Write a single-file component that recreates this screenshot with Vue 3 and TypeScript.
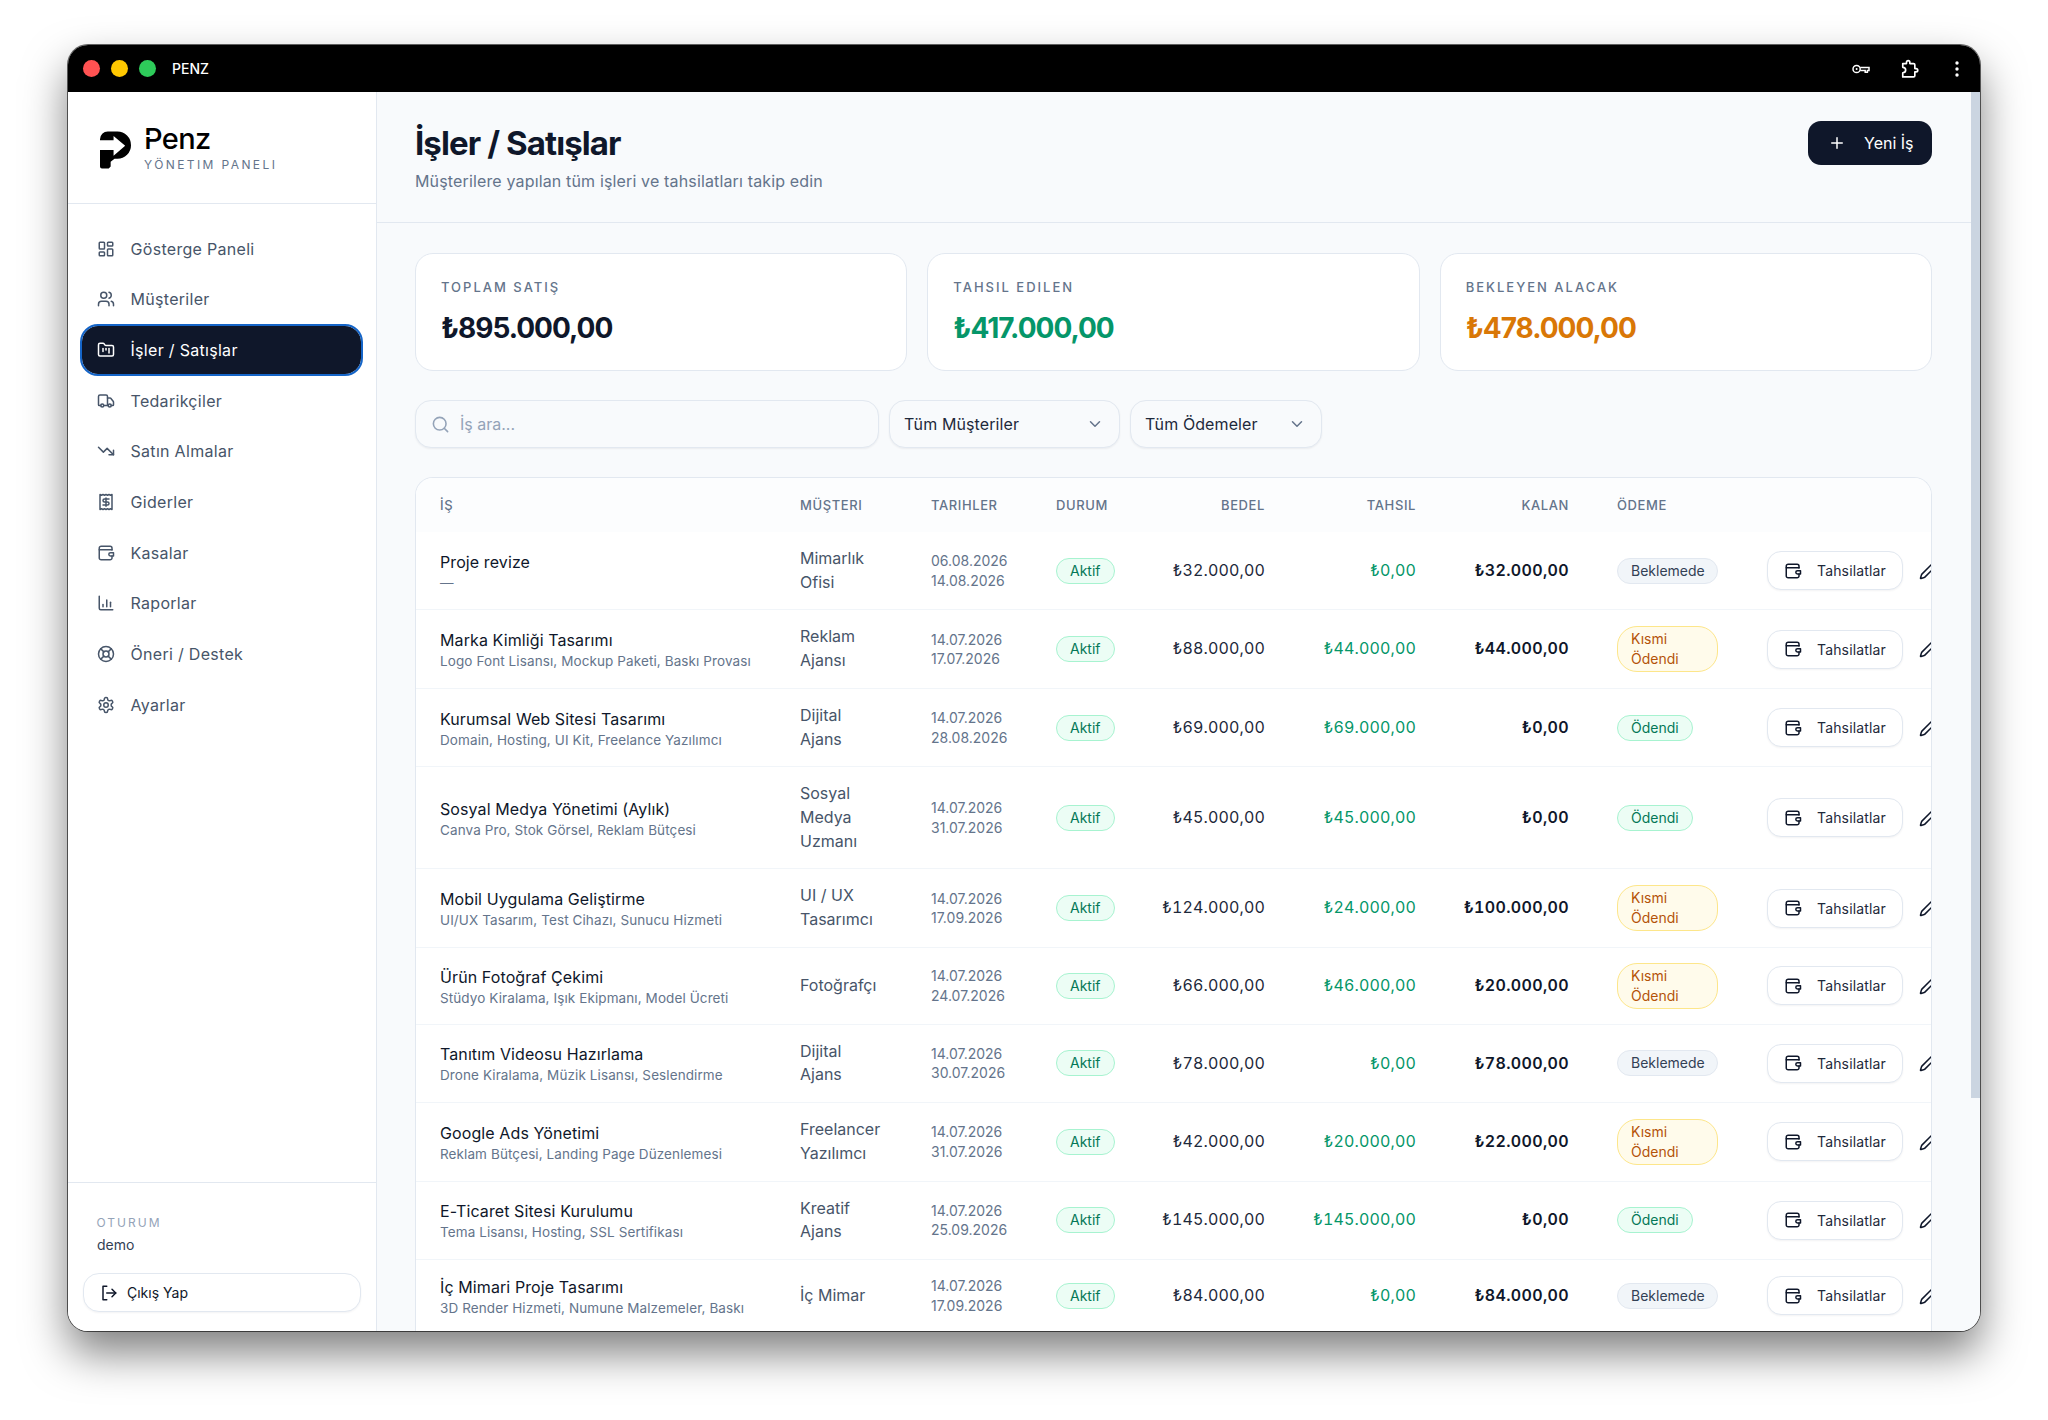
<template>
  <div class="page">
    <div class="window">
      <div class="titlebar">
        <span class="dot dot-red"></span>
        <span class="dot dot-yellow"></span>
        <span class="dot dot-green"></span>
        <span class="app-name">PENZ</span>
        <div class="title-actions">
          <svg class="key-icon" viewBox="0 0 18 10" fill="none" stroke="currentColor" stroke-width="1.5">
            <circle cx="4.6" cy="5" r="3.6" />
            <circle cx="4.6" cy="5" r="1" fill="currentColor" stroke="none" />
            <path d="M8.2 3.4h8.8v3.2h-1.6v1.6h-2.2V6.6H8.2" />
          </svg>
          <svg class="puzzle-icon" viewBox="0 0 24 24" fill="none" stroke="currentColor" stroke-width="2" stroke-linejoin="round">
            <path d="M20.5 11.5H19V7a1.5 1.5 0 0 0-1.500-1.500h-4.500V4a2 2 0 0 0-4 0v1.500H4.500V10c2.500 0 3.500 1.500 3.500 3.300S7 16.500 4.500 16.500V21.500H17.500A1.500 1.500 0 0 0 19 20v-4.500h1.500a2 2 0 0 0 0-4z" />
          </svg>
          <svg class="kebab-icon" viewBox="0 0 4 16" fill="currentColor">
            <circle cx="2" cy="2" r="1.700" />
            <circle cx="2" cy="8" r="1.700" />
            <circle cx="2" cy="14" r="1.700" />
          </svg>
        </div>
      </div>

      <div class="body">
        <aside class="sidebar">
          <div class="brand">
            <svg class="brand-mark" viewBox="0 0 32 38">
              <path d="M0 8a8 8 0 0 1 8-8h10a14 14 0 0 1 0 28h-3l-4 3v5l-2 2H2a2 2 0 0 1-2-2z" fill="#000" />
              <path d="M0 9h14V4.500L26 14.500 14 25v-6H0z" fill="#fff" />
            </svg>
            <div>
              <div class="brand-name">Penz</div>
              <div class="brand-sub">YÖNETIM PANELI</div>
            </div>
          </div>

          <nav class="nav">
            <a v-for="item in navItems" :key="item.label" class="nav-item" :class="{ active: item.label === activeNav }">
              <svg class="nav-icon" viewBox="0 0 24 24" v-html="icons[item.icon]" />
              <span>{{ item.label }}</span>
            </a>
          </nav>

          <div class="session">
            <div class="session-label">OTURUM</div>
            <div class="session-user">demo</div>
            <button type="button" class="logout">
              <svg class="logout-icon" viewBox="0 0 24 24" v-html="icons.logout" />
              Çıkış Yap
            </button>
          </div>
        </aside>

        <main class="main">
          <div class="content">
            <header class="page-head">
              <div>
                <h1>İşler / Satışlar</h1>
                <p>Müşterilere yapılan tüm işleri ve tahsilatları takip edin</p>
              </div>
              <button type="button" class="new-btn">
                <svg class="plus-icon" viewBox="0 0 24 24" v-html="icons.plus" />
                Yeni İş
              </button>
            </header>

            <section class="cards">
              <div v-for="card in cards" :key="card.label" class="card">
                <div class="card-label">{{ card.label }}</div>
                <div class="card-value" :class="card.tone">{{ card.value }}</div>
              </div>
            </section>

            <section class="filters">
              <div class="search">
                <svg class="search-icon" viewBox="0 0 24 24" v-html="icons.search" />
                <span>İş ara...</span>
              </div>
              <div class="select customer">
                <span>Tüm Müşteriler</span>
                <svg class="chevron" viewBox="0 0 24 24" v-html="icons.chevron" />
              </div>
              <div class="select payment">
                <span>Tüm Ödemeler</span>
                <svg class="chevron" viewBox="0 0 24 24" v-html="icons.chevron" />
              </div>
            </section>

            <section class="table-card">
              <table>
                <colgroup>
                  <col style="width: 366px" />
                  <col style="width: 131px" />
                  <col style="width: 125px" />
                  <col style="width: 95px" />
                  <col style="width: 150px" />
                  <col style="width: 151px" />
                  <col style="width: 153px" />
                  <col style="width: 162px" />
                  <col style="width: 230px" />
                </colgroup>
                <thead>
                  <tr>
                    <th class="first">İŞ</th>
                    <th>MÜŞTERI</th>
                    <th>TARIHLER</th>
                    <th>DURUM</th>
                    <th class="num">BEDEL</th>
                    <th class="num">TAHSIL</th>
                    <th class="num">KALAN</th>
                    <th class="pay-col">ÖDEME</th>
                    <th></th>
                  </tr>
                </thead>
                <tbody>
                  <tr v-for="row in rows" :key="row.name">
                    <td class="first">
                      <div class="job-name">{{ row.name }}</div>
                      <div class="job-sub">{{ row.sub }}</div>
                    </td>
                    <td class="client">{{ row.client }}</td>
                    <td class="dates">{{ row.start }}<br />{{ row.end }}</td>
                    <td><span class="pill ok">Aktif</span></td>
                    <td class="num amount">₺{{ row.price }}</td>
                    <td class="num collected">₺{{ row.paid }}</td>
                    <td class="num remaining">₺{{ row.left }}</td>
                    <td class="pay-col"><span class="pill" :class="toneOf(row.status)">{{ row.status }}</span></td>
                    <td>
                      <div class="row-actions">
                        <button type="button" class="collect-btn">
                          <svg class="wallet-icon" viewBox="0 0 24 24" v-html="icons.wallet" />
                          Tahsilatlar
                        </button>
                        <svg class="pencil-icon" viewBox="0 0 24 24" v-html="icons.pencil" />
                      </div>
                    </td>
                  </tr>
                </tbody>
              </table>
            </section>
          </div>
          <div class="scrollbar"><div class="scroll-thumb"></div></div>
        </main>
      </div>
    </div>
  </div>
</template>

<script setup lang="ts">
type Status = 'Beklemede' | 'Kısmi Ödendi' | 'Ödendi'

interface JobRow {
  name: string
  sub: string
  client: string
  start: string
  end: string
  price: string
  paid: string
  left: string
  status: Status
}

const activeNav = 'İşler / Satışlar'

const icons: Record<string, string> = {
  dashboard: '<rect x="3" y="3" width="7" height="9" rx="1"/><rect x="14" y="3" width="7" height="5" rx="1"/><rect x="14" y="12" width="7" height="9" rx="1"/><rect x="3" y="16" width="7" height="5" rx="1"/>',
  users: '<path d="M16 21v-2a4 4 0 0 0-4-4H6a4 4 0 0 0-4 4v2"/><circle cx="9" cy="7" r="4"/><path d="M22 21v-2a4 4 0 0 0-3-3.870"/><path d="M16 3.130a4 4 0 0 1 0 7.750"/>',
  folder: '<path d="M4 20h16a2 2 0 0 0 2-2V8a2 2 0 0 0-2-2h-7.930a2 2 0 0 1-1.660-.9l-.82-1.200A2 2 0 0 0 7.930 3H4a2 2 0 0 0-2 2v13c0 1.100.9 2 2 2Z"/><path d="M8 10v4"/><path d="M12 10v2"/><path d="M16 10v6"/>',
  truck: '<path d="M14 18V6a2 2 0 0 0-2-2H4a2 2 0 0 0-2 2v11a1 1 0 0 0 1 1h2"/><path d="M15 18H9"/><path d="M19 18h2a1 1 0 0 0 1-1v-3.650a1 1 0 0 0-.22-.624l-3.480-4.350A1 1 0 0 0 17.520 8H14"/><circle cx="17" cy="18" r="2"/><circle cx="7" cy="18" r="2"/>',
  trend: '<polyline points="22 17 13.500 8.500 8.500 13.500 2 7"/><polyline points="16 17 22 17 22 11"/>',
  receipt: '<path d="M4 2v20l2-1 2 1 2-1 2 1 2-1 2 1 2-1 2 1V2l-2 1-2-1-2 1-2-1-2 1-2-1-2 1Z"/><path d="M16 8h-6a2 2 0 1 0 0 4h4a2 2 0 1 1 0 4H8"/><path d="M12 17.500v-11"/>',
  wallet: '<path d="M20 8V5.500A2.500 2.500 0 0 0 17.500 3h-12A2.500 2.500 0 0 0 3 5.500v13A2.500 2.500 0 0 0 5.500 21h12a2.500 2.500 0 0 0 2.500-2.500V16"/><path d="M3 7.500h17"/><path d="M22 11.500h-4a2.250 2.250 0 0 0 0 4.500h4z"/>',
  chart: '<path d="M3 3v16a2 2 0 0 0 2 2h16"/><path d="M8 17v-3"/><path d="M13 17V8"/><path d="M18 17v-6"/>',
  buoy: '<circle cx="12" cy="12" r="10"/><circle cx="12" cy="12" r="4"/><path d="m4.930 4.930 4.240 4.240"/><path d="m14.830 9.170 4.240-4.240"/><path d="m14.830 14.830 4.240 4.240"/><path d="m9.170 14.830-4.240 4.240"/>',
  settings: '<path d="M12.220 2h-.44a2 2 0 0 0-2 2v.18a2 2 0 0 1-1 1.730l-.43.25a2 2 0 0 1-2 0l-.15-.08a2 2 0 0 0-2.730.73l-.22.38a2 2 0 0 0 .73 2.730l.15.1a2 2 0 0 1 1 1.720v.51a2 2 0 0 1-1 1.740l-.15.09a2 2 0 0 0-.73 2.730l.22.38a2 2 0 0 0 2.730.73l.15-.08a2 2 0 0 1 2 0l.43.25a2 2 0 0 1 1 1.730V20a2 2 0 0 0 2 2h.44a2 2 0 0 0 2-2v-.18a2 2 0 0 1 1-1.730l.43-.25a2 2 0 0 1 2 0l.15.08a2 2 0 0 0 2.730-.73l.22-.39a2 2 0 0 0-.73-2.730l-.15-.08a2 2 0 0 1-1-1.740v-.5a2 2 0 0 1 1-1.740l.15-.09a2 2 0 0 0 .73-2.730l-.22-.38a2 2 0 0 0-2.730-.73l-.15.08a2 2 0 0 1-2 0l-.43-.25a2 2 0 0 1-1-1.730V4a2 2 0 0 0-2-2z"/><circle cx="12" cy="12" r="3"/>',
  logout: '<path d="M9 3H4v18h5"/><path d="m16 17 5-5-5-5"/><path d="M21 12H9"/>',
  plus: '<path d="M5 12h14"/><path d="M12 5v14"/>',
  search: '<circle cx="11" cy="11" r="8"/><path d="m21 21-4.300-4.300"/>',
  chevron: '<path d="m6 9 6 6 6-6"/>',
  pencil: '<path d="M21.174 6.812a1 1 0 0 0-3.986-3.987L3.842 16.174a2 2 0 0 0-.5.83l-1.321 4.352a.5.5 0 0 0 .623.622l4.353-1.320a2 2 0 0 0 .83-.497z"/>'
}

const navItems = [
  { label: 'Gösterge Paneli', icon: 'dashboard' },
  { label: 'Müşteriler', icon: 'users' },
  { label: 'İşler / Satışlar', icon: 'folder' },
  { label: 'Tedarikçiler', icon: 'truck' },
  { label: 'Satın Almalar', icon: 'trend' },
  { label: 'Giderler', icon: 'receipt' },
  { label: 'Kasalar', icon: 'wallet' },
  { label: 'Raporlar', icon: 'chart' },
  { label: 'Öneri / Destek', icon: 'buoy' },
  { label: 'Ayarlar', icon: 'settings' }
]

const cards = [
  { label: 'TOPLAM SATIŞ', value: '₺895.000,00', tone: 'ink' },
  { label: 'TAHSIL EDILEN', value: '₺417.000,00', tone: 'green' },
  { label: 'BEKLEYEN ALACAK', value: '₺478.000,00', tone: 'orange' }
]

const rows: JobRow[] = [
  { name: 'Proje revize', sub: '—', client: 'Mimarlık Ofisi', start: '06.08.2026', end: '14.08.2026', price: '32.000,00', paid: '0,00', left: '32.000,00', status: 'Beklemede' },
  { name: 'Marka Kimliği Tasarımı', sub: 'Logo Font Lisansı, Mockup Paketi, Baskı Provası', client: 'Reklam Ajansı', start: '14.07.2026', end: '17.07.2026', price: '88.000,00', paid: '44.000,00', left: '44.000,00', status: 'Kısmi Ödendi' },
  { name: 'Kurumsal Web Sitesi Tasarımı', sub: 'Domain, Hosting, UI Kit, Freelance Yazılımcı', client: 'Dijital Ajans', start: '14.07.2026', end: '28.08.2026', price: '69.000,00', paid: '69.000,00', left: '0,00', status: 'Ödendi' },
  { name: 'Sosyal Medya Yönetimi (Aylık)', sub: 'Canva Pro, Stok Görsel, Reklam Bütçesi', client: 'Sosyal Medya Uzmanı', start: '14.07.2026', end: '31.07.2026', price: '45.000,00', paid: '45.000,00', left: '0,00', status: 'Ödendi' },
  { name: 'Mobil Uygulama Geliştirme', sub: 'UI/UX Tasarım, Test Cihazı, Sunucu Hizmeti', client: 'UI / UX Tasarımcı', start: '14.07.2026', end: '17.09.2026', price: '124.000,00', paid: '24.000,00', left: '100.000,00', status: 'Kısmi Ödendi' },
  { name: 'Ürün Fotoğraf Çekimi', sub: 'Stüdyo Kiralama, Işık Ekipmanı, Model Ücreti', client: 'Fotoğrafçı', start: '14.07.2026', end: '24.07.2026', price: '66.000,00', paid: '46.000,00', left: '20.000,00', status: 'Kısmi Ödendi' },
  { name: 'Tanıtım Videosu Hazırlama', sub: 'Drone Kiralama, Müzik Lisansı, Seslendirme', client: 'Dijital Ajans', start: '14.07.2026', end: '30.07.2026', price: '78.000,00', paid: '0,00', left: '78.000,00', status: 'Beklemede' },
  { name: 'Google Ads Yönetimi', sub: 'Reklam Bütçesi, Landing Page Düzenlemesi', client: 'Freelancer Yazılımcı', start: '14.07.2026', end: '31.07.2026', price: '42.000,00', paid: '20.000,00', left: '22.000,00', status: 'Kısmi Ödendi' },
  { name: 'E-Ticaret Sitesi Kurulumu', sub: 'Tema Lisansı, Hosting, SSL Sertifikası', client: 'Kreatif Ajans', start: '14.07.2026', end: '25.09.2026', price: '145.000,00', paid: '145.000,00', left: '0,00', status: 'Ödendi' },
  { name: 'İç Mimari Proje Tasarımı', sub: '3D Render Hizmeti, Numune Malzemeler, Baskı', client: 'İç Mimar', start: '14.07.2026', end: '17.09.2026', price: '84.000,00', paid: '0,00', left: '84.000,00', status: 'Beklemede' }
]

const toneOf = (status: Status) => {
  if (status === 'Ödendi') return 'ok'
  if (status === 'Kısmi Ödendi') return 'warn'
  return 'muted'
}
</script>

<style>
html,
body {
  margin: 0;
  background: #fff;
}
</style>

<style scoped>
* {
  box-sizing: border-box;
}

.page {
  width: 2048px;
  height: 1420px;
  padding: 45px 68px 89px;
  overflow: hidden;
  font-family: Inter, "Noto Sans", sans-serif;
  color: #0f172a;
}

.window {
  display: flex;
  flex-direction: column;
  height: 100%;
  border-radius: 20px;
  overflow: hidden;
  background: #fff;
  box-shadow: 0 0 0 1px rgba(0, 0, 0, 0.6), 0 22px 44px rgba(0, 0, 0, 0.5);
}

.titlebar {
  flex: none;
  display: flex;
  align-items: center;
  height: 47px;
  padding: 0 21px 0 15px;
  background: #000;
  color: #fff;
}

.dot {
  width: 17px;
  height: 17px;
  margin-right: 11px;
  border-radius: 50%;
}

.dot-red { background: #ff5252; }
.dot-yellow { background: #ffc800; }
.dot-green { background: #2ecb5a; }

.app-name {
  margin-left: 5px;
  font-size: 14px;
  font-weight: 500;
}

.title-actions {
  display: flex;
  align-items: center;
  margin-left: auto;
}

.key-icon {
  width: 18px;
  height: 10px;
  margin-right: 29px;
}

.puzzle-icon {
  width: 20px;
  height: 20px;
  margin-right: 36px;
}

.kebab-icon {
  width: 4px;
  height: 16px;
}

.body {
  flex: 1;
  display: flex;
  min-height: 0;
}

/* sidebar */
.sidebar {
  flex: none;
  display: flex;
  flex-direction: column;
  width: 309px;
  border-right: 1px solid #e2e8f0;
  background: #fff;
}

.brand {
  display: flex;
  align-items: center;
  gap: 13px;
  height: 112px;
  padding: 0 32px;
  border-bottom: 1px solid #e2e8f0;
}

.brand-mark {
  width: 31px;
  height: 38px;
  margin-top: 4px;
}

.brand-name {
  position: relative;
  font-size: 29px;
  line-height: 32px;
  font-weight: 500;
  letter-spacing: -0.6px;
  color: #000;
}

.brand-name::before {
  content: "";
  position: absolute;
  left: 0;
  top: 12px;
  width: 11px;
  height: 2px;
  background: #fff;
}

.brand-sub {
  margin-top: 2px;
  font-size: 12px;
  line-height: 16px;
  letter-spacing: 2.400px;
  color: #64748b;
}

.nav {
  flex: 1;
  display: flex;
  flex-direction: column;
  gap: 2.700px;
  padding: 20.500px 15px 0 14px;
}

.nav-item {
  display: flex;
  align-items: center;
  gap: 15.500px;
  height: 48px;
  padding-left: 15px;
  border-radius: 16px;
  font-size: 16px;
  letter-spacing: 0.3px;
  color: #475569;
}

.nav-item.active {
  background: #0f172a;
  color: #fff;
  outline: 2px solid #1565c8;
}

.nav-icon {
  width: 18px;
  height: 18px;
  fill: none;
  stroke: currentColor;
  stroke-width: 2;
  stroke-linecap: round;
  stroke-linejoin: round;
}

.session {
  height: 149px;
  padding: 32px 15px 0;
  border-top: 1px solid #e2e8f0;
}

.session-label {
  padding-left: 13.500px;
  font-size: 12px;
  line-height: 16px;
  letter-spacing: 2px;
  color: #94a3b8;
}

.session-user {
  margin-top: 4px;
  padding-left: 14px;
  font-size: 14px;
  line-height: 20px;
  color: #334155;
}

.logout {
  display: flex;
  align-items: center;
  gap: 9px;
  width: 278px;
  height: 39px;
  margin-top: 18px;
  padding: 0 16px;
  border: 1px solid #e2e8f0;
  border-radius: 16px;
  background: #fff;
  box-shadow: 0 1px 2px rgba(15, 23, 42, 0.05);
  font: 400 14px Inter, sans-serif;
  color: #0f172a;
}

.logout-icon {
  width: 18px;
  height: 18px;
  fill: none;
  stroke: currentColor;
  stroke-width: 2;
  stroke-linecap: round;
  stroke-linejoin: round;
}

/* main */
.main {
  flex: 1;
  display: flex;
  min-width: 0;
  background: #f8fafc;
  overflow: hidden;
}

.content {
  flex: 1;
  min-width: 0;
}

.scrollbar {
  flex: none;
  width: 9px;
}

.scroll-thumb {
  height: 1006px;
  background: #cbd5e1;
}

.page-head {
  display: flex;
  align-items: flex-start;
  justify-content: space-between;
  height: 131px;
  padding: 29px 39px 0 38px;
  border-bottom: 1px solid #e2e8f0;
}

h1 {
  margin: 2px 0 0;
  font-size: 33px;
  line-height: 40px;
  font-weight: 700;
  letter-spacing: -0.9px;
  color: #0f172a;
}

.page-head p {
  margin: 6px 0 0;
  font-size: 16px;
  line-height: 24px;
  letter-spacing: 0.15px;
  color: #64748b;
}

.new-btn {
  display: flex;
  align-items: center;
  gap: 18px;
  width: 124px;
  height: 44px;
  padding: 0 20px;
  border: 0;
  border-radius: 13px;
  background: #0f172a;
  font: 400 16px Inter, sans-serif;
  white-space: nowrap;
  color: #fff;
}

.plus-icon {
  flex: none;
  width: 18px;
  height: 18px;
  fill: none;
  stroke: currentColor;
  stroke-width: 2;
  stroke-linecap: round;
}

.cards {
  display: grid;
  grid-template-columns: repeat(3, 1fr);
  gap: 20px;
  padding: 30px 39px 0 38px;
}

.card {
  height: 118px;
  padding: 23px 24px 23px 25px;
  border: 1px solid #e2e8f0;
  border-radius: 18px;
  background: #fff;
}

.card-label {
  font-size: 13px;
  line-height: 20px;
  font-weight: 500;
  letter-spacing: 2px;
  color: #64748b;
}

.card-value {
  margin-top: 13px;
  font-size: 28px;
  line-height: 36px;
  font-weight: 700;
  letter-spacing: -1px;
}

.ink { color: #0f172a; }
.green { color: #059669; }
.orange { color: #d97706; }

.filters {
  display: flex;
  gap: 10px;
  padding: 29px 39px 0 38px;
}

.search,
.select {
  display: flex;
  align-items: center;
  height: 48px;
  border: 1px solid #e2e8f0;
  border-radius: 16px;
  background: #f8fafc;
  box-shadow: 0 1px 2px rgba(15, 23, 42, 0.06);
  font-size: 16px;
}

.search {
  width: 464px;
  gap: 10px;
  padding: 0 15px;
  color: #94a3b8;
}

.search-icon {
  width: 19px;
  height: 19px;
  fill: none;
  stroke: #94a3b8;
  stroke-width: 2;
  stroke-linecap: round;
}

.select {
  justify-content: space-between;
  padding: 0 15px 0 14px;
  letter-spacing: 0.1px;
  color: #1e293b;
}

.customer { width: 231px; }
.payment { width: 192px; }

.chevron {
  width: 18px;
  height: 18px;
  fill: none;
  stroke: #64748b;
  stroke-width: 2;
  stroke-linecap: round;
  stroke-linejoin: round;
}

.table-card {
  margin: 29px 39px 0 38px;
  border: 1px solid #e2e8f0;
  border-bottom: 0;
  border-radius: 18px 18px 0 0;
  background: #fff;
  overflow: hidden;
}

table {
  width: 1563px;
  table-layout: fixed;
  border-collapse: collapse;
}

th {
  height: 54px;
  padding: 0 18px;
  background: #fcfdfe;
  text-align: left;
  font-size: 13px;
  font-weight: 500;
  letter-spacing: 0.6px;
  color: #64748b;
}

td {
  padding: 15px 18px;
  border-top: 1px solid #f1f5f9;
  font-size: 16px;
  line-height: 23.700px;
  color: #0f172a;
}

tbody tr:first-child td {
  border-top: 0;
}

th.first,
td.first {
  padding-left: 24px;
  padding-right: 0;
}

.num {
  text-align: right;
  font-variant-numeric: tabular-nums;
}

.pay-col {
  padding-left: 30px;
  padding-right: 0;
}

td.client {
  padding-right: 26px;
  color: #475569;
}

.job-name {
  font-size: 16px;
  line-height: 24px;
  font-weight: 400;
  letter-spacing: 0.1px;
}

.job-sub {
  font-size: 13.500px;
  line-height: 18px;
  letter-spacing: 0.1px;
  color: #64748b;
}

.dates {
  font-size: 14px;
  line-height: 19.500px;
  color: #64748b;
}

.amount {
  letter-spacing: 0.15px;
  color: #1e293b;
}

.collected {
  letter-spacing: 0.15px;
  color: #059669;
}

.remaining {
  font-weight: 600;
  letter-spacing: 0.35px;
}

.pill {
  display: inline-block;
  max-width: 101px;
  padding: 2px 13px;
  border: 1px solid;
  border-radius: 20px;
  font-size: 14px;
  line-height: 20px;
  vertical-align: middle;
}

.pill.ok {
  border-color: #a7f3d0;
  background: #ecfdf5;
  color: #047857;
}

.pill.warn {
  border-color: #fde68a;
  background: #fffbeb;
  color: #b45309;
}

.pill.muted {
  border-color: #e2e8f0;
  background: #f1f5f9;
  color: #334155;
}

.row-actions {
  display: flex;
  align-items: center;
  gap: 16px;
}

.collect-btn {
  display: flex;
  align-items: center;
  gap: 15px;
  flex: none;
  width: 136px;
  height: 39px;
  padding: 0 16px;
  border: 1px solid #e2e8f0;
  border-radius: 14px;
  background: #fff;
  box-shadow: 0 1px 2px rgba(15, 23, 42, 0.05);
  font: 400 14px Inter, sans-serif;
  letter-spacing: 0.15px;
  color: #1e293b;
}

.wallet-icon,
.pencil-icon {
  flex: none;
  width: 18px;
  height: 18px;
  fill: none;
  stroke: #0f172a;
  stroke-width: 2;
  stroke-linecap: round;
  stroke-linejoin: round;
}
</style>
